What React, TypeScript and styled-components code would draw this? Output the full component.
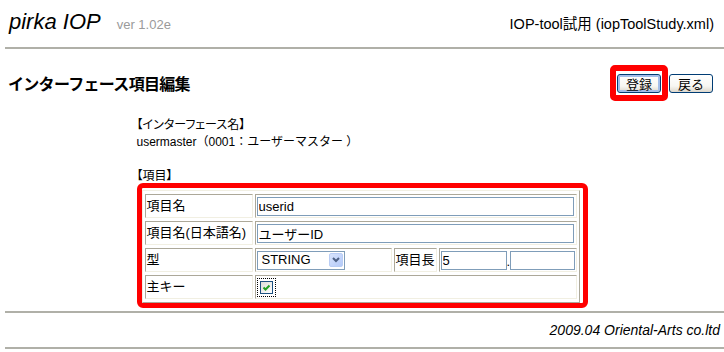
import styled, { createGlobalStyle } from 'styled-components';

const GlobalStyle = createGlobalStyle`
  body {
    margin: 0;
    background: #ffffff;
    color: #000000;
    font-family: "Liberation Sans", "Noto Sans CJK JP", sans-serif;
  }
`;

const Header = styled.header`
  display: flex;
  align-items: baseline;
  height: 47px;
  box-sizing: border-box;
  padding: 9px 10px 0 9px;
`;

const Logo = styled.h1`
  margin: 0;
  font-size: 22px;
  line-height: 26px;
  font-style: italic;
  font-weight: normal;
`;

const Version = styled.span`
  margin-left: 16px;
  font-size: 13px;
  color: #9a9a9a;
`;

const ToolName = styled.span`
  margin-left: auto;
  font-size: 14.5px;
`;

const Rule = styled.hr`
  margin: 0 0 0 5px;
  border: 0;
  height: 2px;
  background: #b0b0a8;
`;

const TitleBar = styled.div`
  display: flex;
  align-items: center;
  justify-content: space-between;
  margin-top: 16px;
  padding: 0 11px 0 8px;
`;

const PageTitle = styled.h2`
  margin: 0;
  font-family: "Noto Sans CJK JP", sans-serif;
  font-size: 16px;
  font-weight: bold;
  letter-spacing: -0.7px;
`;

const Actions = styled.div`
  display: flex;
  align-items: center;
`;

const Highlight = styled.span`
  display: inline-flex;
  border: 6px solid #ff0000;
  border-radius: 5px;
  padding: 3px 1px 2px 1px;
  margin-right: 1px;
`;

const Button = styled.button<{ $default?: boolean }>`
  height: 19px;
  padding: 0 8px;
  border: 1px solid #003c74;
  border-radius: 3px;
  background: linear-gradient(#ffffff, #f7f6f2 65%, #dcd7cc);
  font-family: "Noto Sans CJK JP", sans-serif;
  font-size: 13px;
  line-height: 17px;
  color: #000;
  box-shadow: ${(p) => (p.$default ? 'inset 0 0 0 2px #a3bde9' : 'none')};
`;

const Content = styled.main`
  width: 451px;
  margin: 16px auto 0;
  font-size: 12px;
  line-height: 17px;
`;

const Caption = styled.div<{ $gap?: boolean }>`
  margin-top: ${(p) => (p.$gap ? '17px' : '0')};
  font-feature-settings: "palt";
`;

const Value = styled.div``;

const Frame = styled.div`
  margin-top: -2px;
  padding-top: 2px;
  border: 5px solid #ff0000;
  border-radius: 6px;
`;

const Table = styled.table`
  border-collapse: separate;
  border-spacing: 2px 3px;
  border: 1px solid;
  border-color: #f1efe2 #aca899 #aca899 #f1efe2;
  font-size: 13px;
`;

const Cell = styled.td<{ $w?: number }>`
  box-sizing: border-box;
  height: 24px;
  width: ${(p) => (p.$w ? `${p.$w}px` : 'auto')};
  padding: 0 1px;
  border: 1px solid;
  border-color: #aca899 #f1efe2 #f1efe2 #aca899;
  vertical-align: middle;
  white-space: nowrap;
  line-height: 16px;
`;

const TextInput = styled.input<{ $w: number }>`
  box-sizing: border-box;
  width: ${(p) => p.$w}px;
  height: 19px;
  margin: 0;
  padding: 0 1px;
  border: 1px solid #7f9db9;
  font-family: "Liberation Sans", "Noto Sans CJK JP", sans-serif;
  font-size: 13px;
  vertical-align: middle;
`;

const Dot = styled.span`
  display: inline-block;
  width: 3px;
  vertical-align: bottom;
`;

const Select = styled.div`
  box-sizing: border-box;
  width: 88px;
  height: 19px;
  display: flex;
  align-items: center;
  justify-content: space-between;
  padding: 0 1px 0 4px;
  border: 1px solid #7f9db9;
  font-size: 13px;
`;

const SelectArrow = styled.span`
  box-sizing: border-box;
  width: 14px;
  height: 14px;
  display: flex;
  align-items: center;
  justify-content: center;
  border: 1px solid #b9cdf5;
  border-radius: 2px;
  background: linear-gradient(135deg, #d8e4fd, #b3c9f8);
`;

const Focus = styled.span`
  display: inline-flex;
  padding: 2px;
  border: 1px dotted #000;
  vertical-align: middle;
`;

const CheckBox = styled.span`
  box-sizing: border-box;
  width: 13px;
  height: 13px;
  display: flex;
  align-items: center;
  justify-content: center;
  border: 1px solid #1c5180;
  background: linear-gradient(135deg, #dcdcd7, #ffffff);
`;

const Footer = styled.footer`
  height: 34px;
  display: flex;
  align-items: center;
  justify-content: flex-end;
  padding-right: 4px;
  font-size: 14px;
  font-style: italic;
`;

const FooterRule = styled(Rule)`
  margin-top: 3px;
`;

export default function App() {
  return (
    <>
      <GlobalStyle />
      <Header>
        <Logo>pirka IOP</Logo>
        <Version>ver 1.02e</Version>
        <ToolName>IOP-tool試用 (iopToolStudy.xml)</ToolName>
      </Header>
      <Rule />
      <TitleBar>
        <PageTitle>インターフェース項目編集</PageTitle>
        <Actions>
          <Highlight>
            <Button $default>登録</Button>
          </Highlight>
          <Button>戻る</Button>
        </Actions>
      </TitleBar>
      <Content>
        <Caption>【インターフェース名】</Caption>
        <Value>usermaster（0001：ユーザーマスター ）</Value>
        <Caption $gap>【項目】</Caption>
        <Frame>
          <Table>
            <tbody>
              <tr>
                <Cell $w={108}>項目名</Cell>
                <Cell colSpan={3}>
                  <TextInput $w={317} defaultValue="userid" />
                </Cell>
              </tr>
              <tr>
                <Cell>項目名(日本語名)</Cell>
                <Cell colSpan={3}>
                  <TextInput $w={317} defaultValue="ユーザーID" />
                </Cell>
              </tr>
              <tr>
                <Cell>型</Cell>
                <Cell $w={137}>
                  <Select>
                    <span>STRING</span>
                    <SelectArrow>
                      <svg width="8" height="6" viewBox="0 0 8 6">
                        <polyline points="1,1 4,4 7,1" fill="none" stroke="#4d6185" strokeWidth="2" />
                      </svg>
                    </SelectArrow>
                  </Select>
                </Cell>
                <Cell $w={43}>項目長</Cell>
                <Cell $w={138}>
                  <TextInput $w={66} defaultValue="5" />
                  <Dot>.</Dot>
                  <TextInput $w={65} defaultValue="" />
                </Cell>
              </tr>
              <tr>
                <Cell>主キー</Cell>
                <Cell colSpan={3}>
                  <Focus>
                    <CheckBox role="checkbox" aria-checked="true">
                      <svg width="9" height="9" viewBox="0 0 9 9">
                        <polyline points="1.5,4.5 3.5,6.5 7.5,2.5" fill="none" stroke="#21a121" strokeWidth="2" />
                      </svg>
                    </CheckBox>
                  </Focus>
                </Cell>
              </tr>
            </tbody>
          </Table>
        </Frame>
      </Content>
      <FooterRule />
      <Footer>2009.04 Oriental-Arts co.ltd</Footer>
      <Rule />
    </>
  );
}
